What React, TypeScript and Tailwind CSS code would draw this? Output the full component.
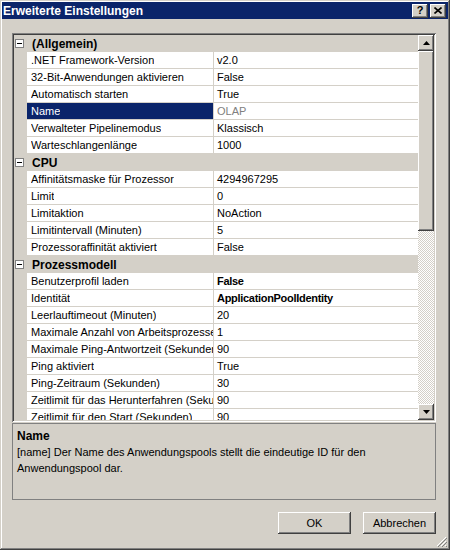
import React from 'react'

type Prop = { name: string; value: string; bold?: boolean; selected?: boolean }
type Cat = { title: string; props: Prop[] }

const cats: Cat[] = [
  {
    title: '(Allgemein)',
    props: [
      { name: '.NET Framework-Version', value: 'v2.0' },
      { name: '32-Bit-Anwendungen aktivieren', value: 'False' },
      { name: 'Automatisch starten', value: 'True' },
      { name: 'Name', value: 'OLAP', selected: true },
      { name: 'Verwalteter Pipelinemodus', value: 'Klassisch' },
      { name: 'Warteschlangenlänge', value: '1000' },
    ],
  },
  {
    title: 'CPU',
    props: [
      { name: 'Affinitätsmaske für Prozessor', value: '4294967295' },
      { name: 'Limit', value: '0' },
      { name: 'Limitaktion', value: 'NoAction' },
      { name: 'Limitintervall (Minuten)', value: '5' },
      { name: 'Prozessoraffinität aktiviert', value: 'False' },
    ],
  },
  {
    title: 'Prozessmodell',
    props: [
      { name: 'Benutzerprofil laden', value: 'False', bold: true },
      { name: 'Identität', value: 'ApplicationPoolIdentity', bold: true },
      { name: 'Leerlauftimeout (Minuten)', value: '20' },
      { name: 'Maximale Anzahl von Arbeitsprozessen', value: '1' },
      { name: 'Maximale Ping-Antwortzeit (Sekunden)', value: '90' },
      { name: 'Ping aktiviert', value: 'True' },
      { name: 'Ping-Zeitraum (Sekunden)', value: '30' },
      { name: 'Zeitlimit für das Herunterfahren (Sekunden)', value: '90' },
      { name: 'Zeitlimit für den Start (Sekunden)', value: '90' },
    ],
  },
]

const raised =
  'bg-[#d4d0c8] shadow-[inset_-1px_-1px_0_#404040,inset_1px_1px_0_#ffffff,inset_-2px_-2px_0_#808080,inset_2px_2px_0_#d4d0c8]'

function Arrow({ up }: { up?: boolean }) {
  return (
    <div className={`w-4 h-4 flex items-center justify-center ${raised}`}>
      <svg width="7" height="4" viewBox="0 0 7 4">
        {up ? <path d="M3.5 0 L7 4 L0 4 Z" fill="#000" /> : <path d="M0 0 L7 0 L3.5 4 Z" fill="#000" />}
      </svg>
    </div>
  )
}

function CategoryRow({ title }: { title: string }) {
  return (
    <div className="flex items-center h-[17px] bg-[#d4d0c8]">
      <div className="w-[9px] h-[9px] ml-[1px] border border-[#808080] bg-white flex items-center justify-center">
        <div className="w-[5px] h-px bg-black" />
      </div>
      <span className="ml-[8px] font-bold text-[12px]">{title}</span>
    </div>
  )
}

function PropRow({ p }: { p: Prop }) {
  return (
    <div className="flex h-[17px]">
      <div className="w-[13px] bg-[#d4d0c8] shrink-0" />
      <div
        className={`w-[187px] shrink-0 pl-[4px] flex items-center overflow-hidden whitespace-nowrap border-b border-r border-[#d4d0c8] ${
          p.selected ? 'bg-[#0a246a] text-white' : 'bg-white'
        }`}
      >
        <span className="overflow-hidden">{p.name}</span>
      </div>
      <div
        className={`flex-1 pl-[3px] flex items-center overflow-hidden whitespace-nowrap bg-white border-b border-[#d4d0c8] ${
          p.bold ? 'font-bold tracking-[-0.3px]' : ''
        } ${p.selected ? 'text-[#808080]' : ''}`}
      >
        {p.value}
      </div>
    </div>
  )
}

export default function App() {
  return (
    <div
      className="w-[450px] h-[550px] bg-[#d4d0c8] p-[2px] flex flex-col text-[11px] text-black shadow-[inset_-1px_-1px_0_#404040,inset_1px_1px_0_#d4d0c8,inset_-2px_-2px_0_#808080,inset_2px_2px_0_#ffffff] relative"
      style={{ fontFamily: '"Liberation Sans", Arial, sans-serif' }}
    >
      {/* title bar */}
      <div className="h-[17px] bg-[#0a246a] flex items-center pl-[1px] pr-[2px]">
        <span className="text-white font-bold text-[12px] flex-1">Erweiterte Einstellungen</span>
        <div className={`w-[16px] h-[14px] flex items-center justify-center font-bold text-[11px] leading-none ${raised}`}>?</div>
        <div className={`w-[16px] h-[14px] ml-[2px] flex items-center justify-center ${raised}`}>
          <svg width="8" height="7" viewBox="0 0 8 7">
            <path d="M0.5 0.5 L7.5 6.5 M7.5 0.5 L0.5 6.5" stroke="#000" strokeWidth="1.6" />
          </svg>
        </div>
      </div>

      <div className="flex-1 flex flex-col pl-[10px] pr-[12px] pt-[14px]">
        {/* property grid */}
        <div className="h-[389px] p-[2px] bg-[#d4d0c8] flex shadow-[inset_1px_1px_0_#808080,inset_-1px_-1px_0_#ffffff,inset_2px_2px_0_#404040,inset_-2px_-2px_0_#d4d0c8]">
          <div className="flex-1 overflow-hidden">
            {cats.map((c) => (
              <div key={c.title}>
                <CategoryRow title={c.title} />
                {c.props.map((p) => (
                  <PropRow key={p.name} p={p} />
                ))}
              </div>
            ))}
          </div>
          <div className="w-4 flex flex-col">
            <Arrow up />
            <div className={`h-[180px] ${raised}`} />
            <div className="flex-1 bg-[repeating-conic-gradient(#d4d0c8_0_25%,#ffffff_0_50%)] bg-[length:2px_2px]" />
            <Arrow />
          </div>
        </div>

        {/* description */}
        <div className="mt-[1px] h-[77px] border border-[#808080] px-[4px] pt-[4px] leading-[16px]">
          <div className="font-bold text-[12px]">Name</div>
          <div>[name] Der Name des Anwendungspools stellt die eindeutige ID für den Anwendungspool dar.</div>
        </div>

        {/* buttons */}
        <div className="mt-[12px] flex justify-end gap-[12px]">
          <button className={`w-[73px] h-[22px] text-[11px] ${raised}`}>OK</button>
          <button className={`w-[73px] h-[22px] text-[11px] ${raised}`}>Abbrechen</button>
        </div>
      </div>

      {/* resize grip */}
      <svg className="absolute right-[3px] bottom-[3px]" width="11" height="11" viewBox="0 0 11 11">
        <path d="M10 1 L1 10 M10 5 L5 10 M10 9 L9 10" stroke="#ffffff" strokeWidth="1" />
        <path d="M11 2 L2 11 M11 6 L6 11 M11 10 L10 11" stroke="#808080" strokeWidth="1" />
      </svg>
    </div>
  )
}
